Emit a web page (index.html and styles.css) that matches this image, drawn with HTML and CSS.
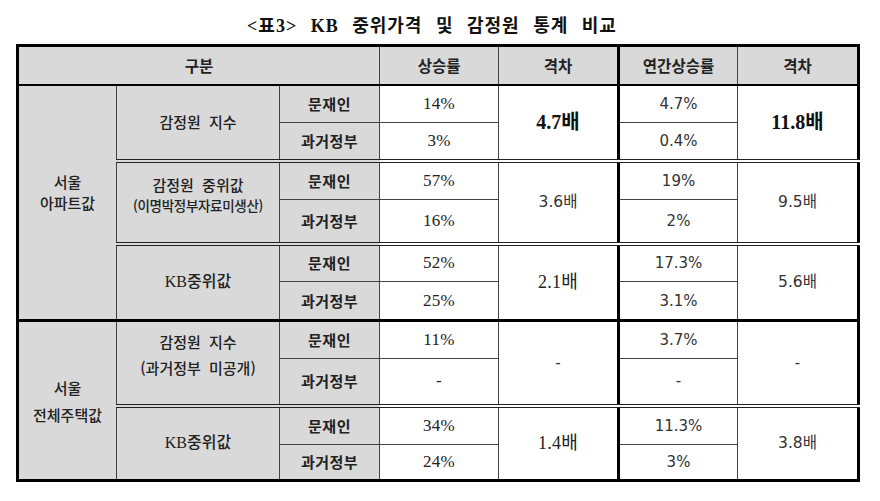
FILE: index.html
```html
<!DOCTYPE html>
<html lang="ko">
<head>
<meta charset="utf-8">
<link rel="stylesheet" href="styles.css">
</head>
<body>
<div class="title">&lt;표3&gt; KB 중위가격 및 감정원 통계 비교</div>
<table class="stats">
  <colgroup>
    <col class="c1"><col class="c2"><col class="c3"><col class="c4"><col class="c5"><col class="c6"><col class="c7">
  </colgroup>
  <tr class="head">
    <th colspan="3">구분</th>
    <th>상승률</th>
    <th>격차</th>
    <th class="tl">연간상승률</th>
    <th>격차</th>
  </tr>
  <tr class="r1a">
    <td rowspan="6" class="lab region ra"><span class="ln">서울</span><span class="ln">아파트값</span></td>
    <td rowspan="2" class="lab kind">감정원 지수</td>
    <td class="lab who">문재인</td>
    <td class="serif">14%</td>
    <td rowspan="2" class="big">4.7배</td>
    <td class="sans tl">4.7%</td>
    <td rowspan="2" class="big">11.8배</td>
  </tr>
  <tr class="r1b">
    <td class="lab who">과거정부</td>
    <td class="serif">3%</td>
    <td class="sans tl">0.4%</td>
  </tr>
  <tr class="r2a dbl">
    <td rowspan="2" class="lab kind k2"><span class="ln">감정원 중위값</span><span class="ln note">(이명박정부자료미생산)</span></td>
    <td class="lab who">문재인</td>
    <td class="serif">57%</td>
    <td rowspan="2" class="sans gap">3.6배</td>
    <td class="sans tl">19%</td>
    <td rowspan="2" class="sans gap">9.5배</td>
  </tr>
  <tr class="r2b">
    <td class="lab who">과거정부</td>
    <td class="serif">16%</td>
    <td class="sans tl">2%</td>
  </tr>
  <tr class="r3a dbl">
    <td rowspan="2" class="lab kind kb">KB중위값</td>
    <td class="lab who">문재인</td>
    <td class="serif">52%</td>
    <td rowspan="2" class="serif gapserif">2.1배</td>
    <td class="sans tl">17.3%</td>
    <td rowspan="2" class="sans gap">5.6배</td>
  </tr>
  <tr class="r3b">
    <td class="lab who">과거정부</td>
    <td class="serif">25%</td>
    <td class="sans tl">3.1%</td>
  </tr>
  <tr class="r4a thick">
    <td rowspan="4" class="lab region rb"><span class="ln">서울</span><span class="ln">전체주택값</span></td>
    <td rowspan="2" class="lab kind k4"><span class="ln">감정원 지수</span><span class="ln">(과거정부 미공개)</span></td>
    <td class="lab who">문재인</td>
    <td class="serif">11%</td>
    <td rowspan="2" class="sans">-</td>
    <td class="sans tl">3.7%</td>
    <td rowspan="2" class="sans">-</td>
  </tr>
  <tr class="r4b">
    <td class="lab who">과거정부</td>
    <td class="serif">-</td>
    <td class="sans tl">-</td>
  </tr>
  <tr class="r5a dbl">
    <td rowspan="2" class="lab kind kb">KB중위값</td>
    <td class="lab who">문재인</td>
    <td class="serif">34%</td>
    <td rowspan="2" class="serif gapserif">1.4배</td>
    <td class="sans tl">11.3%</td>
    <td rowspan="2" class="sans gap">3.8배</td>
  </tr>
  <tr class="r5b">
    <td class="lab who">과거정부</td>
    <td class="serif">24%</td>
    <td class="sans tl">3%</td>
  </tr>
</table>
</body>
</html>
```
FILE: styles.css
```css
html, body {
  margin: 0;
  padding: 0;
  background: #ffffff;
}
body {
  width: 880px;
  height: 501px;
  overflow: hidden;
  font-family: "Noto Sans CJK KR", sans-serif;
  color: #222;
}
.title {
  height: 44px;
  display: flex;
  align-items: center;
  justify-content: center;
  padding-top: 4px;
  padding-right: 16px;
  box-sizing: border-box;
  font-family: "Liberation Serif", "Noto Sans CJK KR", serif;
  font-weight: bold;
  font-size: 18px;
  letter-spacing: 1px;
  word-spacing: 8px;
  color: #111;
}
.stats {
  margin-left: 16px;
  width: 841px;
  table-layout: fixed;
  border-collapse: collapse;
  border: 3px solid #000;
}
.c1 { width: 99px; }
.c2 { width: 163px; }
.c3 { width: 100px; }
.c4 { width: 119px; }
.c5 { width: 120px; }
.c6 { width: 119px; }
.c7 { width: 121px; }
.stats th, .stats td {
  border: 1px solid #444;
  padding: 0;
  text-align: center;
  vertical-align: middle;
  font-size: 15px;
  line-height: 20px;
}
.stats th {
  background: #d9d9d9;
  font-weight: bold;
  font-size: 15.5px;
  color: #222;
  border-bottom: 2px solid #000;
}
.stats .tl {
  border-left: 3px solid #000;
}
.head { height: 39px; }
.r1a { height: 38px; }
.r1b { height: 38px; }
.r2a { height: 39px; }
.r2b { height: 44px; }
.r3a { height: 38px; }
.r3b { height: 39px; }
.r4a { height: 38px; }
.r4b { height: 47px; }
.r5a { height: 39px; }
.r5b { height: 36px; }
.stats .dbl > td { border-top: 4px double #222; }
.stats .thick > td { border-top: 3px solid #000; }
.stats .lab {
  background: #d9d9d9;
  color: #222;
}
.ln {
  display: block;
}
.stats .who {
  font-weight: bold;
  letter-spacing: 0.5px;
}
.stats .kind {
  font-weight: 500;
  word-spacing: 4px;
}
.stats .region {
  font-weight: 500;
  border-left: 3px solid #000;
}
.stats .ra { line-height: 21px; padding-bottom: 20px; }
.stats .rb { line-height: 27px; }
.stats .k2 { line-height: 20px; padding-bottom: 14px; }
.stats .k4 { line-height: 26px; padding-bottom: 16px; }
.stats .kb {
  font-family: "Liberation Serif", "Noto Sans CJK KR", serif;
  font-size: 16px;
  word-spacing: 0;
}
.stats .note {
  font-size: 13.5px;
  letter-spacing: -0.3px;
  word-spacing: 0;
}
.stats .serif {
  font-family: "Liberation Serif", "Noto Sans CJK KR", serif;
  font-size: 17px;
  letter-spacing: 0.3px;
  color: #222;
}
.stats .sans {
  font-family: "DejaVu Sans", "Noto Sans CJK KR", sans-serif;
  font-size: 15px;
  color: #333;
}
.stats .sans.gap { font-size: 15.5px; }
.stats .serif.gapserif { font-size: 18px; }
.stats .big {
  font-family: "Liberation Serif", "Noto Sans CJK KR", serif;
  font-weight: bold;
  font-size: 20px;
  color: #111;
}
```
